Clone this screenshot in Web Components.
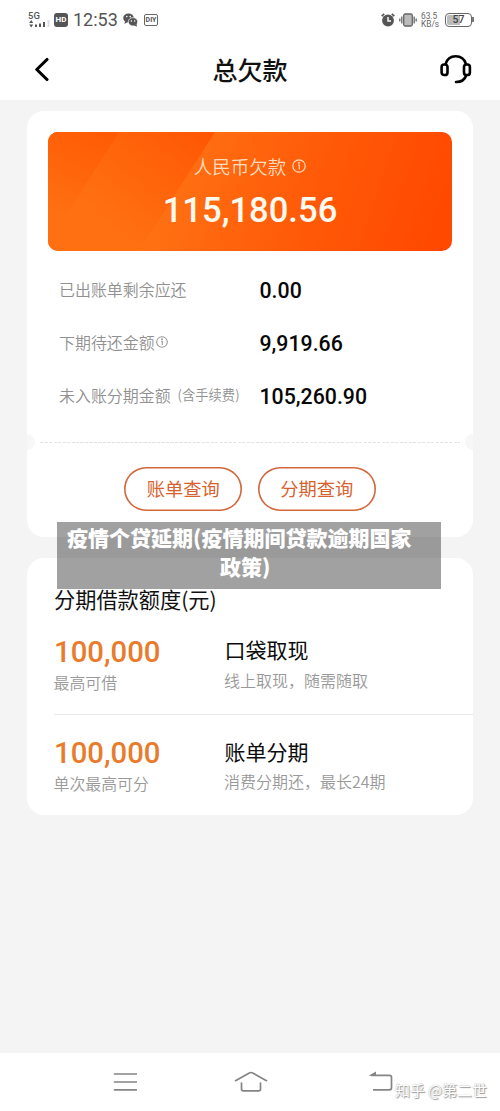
<!DOCTYPE html>
<html lang="zh-CN">
<head>
<meta charset="utf-8">
<title>总欠款</title>
<style>
html,body{margin:0;padding:0}
body{width:500px;height:1111px;overflow:hidden;background:#f4f4f4;font-family:"Noto Sans CJK SC",sans-serif}
</style>
</head>
<body>
<debt-app></debt-app>
<script>
const define = (name, html) => {
  const t = document.createElement('template');
  t.innerHTML = html;
  customElements.define(name, class extends HTMLElement {
    constructor() {
      super();
      this.attachShadow({mode: 'open'}).appendChild(t.content.cloneNode(true));
    }
  });
};

define('info-icon', `<style>:host{display:inline-block;width:14px;height:14px}svg{display:block;width:100%;height:100%}</style>
<svg viewBox="0 0 14 14" fill="none" stroke="currentColor" stroke-width="1.200"><circle cx="7" cy="7" r="6.200"/><path d="M6 6H7.300V10.500"/><circle cx="7" cy="3.700" r=".4" fill="currentColor"/></svg>`);

define('status-bar', `<style>
:host{display:flex;height:39px;align-items:center;padding:0 28px 0 28px;box-sizing:border-box;color:#555;font-family:Roboto,sans-serif}
svg{display:block;flex:none}
.net{width:23px;height:17px;display:flex;flex-direction:column}
.net span{font:500 9.500px/9px Roboto,sans-serif}
.time{font:400 18px/20px Roboto,sans-serif;width:45px;margin-left:5px;white-space:nowrap}
.hd{background:#555;color:#fff;border-radius:3px;width:14px;height:14px;font:700 8px/14px Roboto,sans-serif;text-align:center;margin-left:3px}
.diy{box-sizing:border-box;width:14px;height:12px;border:1px solid #666;border-radius:2px;font:700 7px/10px Roboto,sans-serif;display:flex;justify-content:center;margin-left:6px}
.grow{flex:1}
.speed{font:400 8.300px/8px Roboto,sans-serif;width:19px;margin-left:4px;white-space:nowrap;color:#666}
.bat{box-sizing:border-box;width:27px;height:14px;border:1.4px solid #666;border-radius:4px;margin-left:5px;background:linear-gradient(90deg,#bbb 57%,#fff 57%);background-clip:content-box;padding:1px;font:500 10.5px/10px Roboto,sans-serif;text-align:center;color:#444}
.cap{width:1.5px;height:5px;background:#777;margin-right:-1.5px}
</style>
<div class="net"><span>5G</span><svg width="23" height="8" fill="#555"><path d="M3.200 0 5.200 2.900H1.200ZM3.200 7.500 5.200 4.600H1.200Z"/><path d="M7 4.500h2V7H7zM11 3.500h2V7h-2zM15 2h2v5h-2z"/><path d="M19.500 0h2v7h-2z" fill="#ddd"/></svg></div>
<div class="hd">HD</div>
<div class="time">12:53</div>
<svg style="margin-left:5px" width="15" height="14" viewBox="0 0 15 14"><ellipse cx="5.500" cy="5" rx="5.300" ry="4.600" fill="#555"/><path fill="#555" d="M2 8 1.500 10.900 4.500 9Z"/><ellipse cx="10" cy="8.800" rx="4.700" ry="4.200" fill="#555" stroke="#fff" stroke-width=".7"/><path fill="#555" d="m11 12.300 2.900 1.400-.3-2.700Z"/><g fill="#fff"><circle cx="3.800" cy="3.600" r=".8"/><circle cx="7.200" cy="3.600" r=".8"/><circle cx="8.400" cy="7.900" r=".75"/><circle cx="11.700" cy="7.900" r=".75"/></g></svg>
<div class="diy">DIY</div>
<div class="grow"></div>
<svg width="14" height="14" viewBox="0 0 14 14"><circle cx="7" cy="7.500" r="5.900" fill="#555"/><path d="M.7 3.200 3.200.8M13.300 3.200 10.800.8" stroke="#555" stroke-width="1.700"/><path d="M7 4v4h3" fill="none" stroke="#fff" stroke-width="1.400"/></svg>
<svg style="margin-left:4px" width="18" height="14" viewBox="0 0 18 14" fill="none" stroke="#666" stroke-width="1.300"><rect x="4.700" y="1" width="8.600" height="12" rx="1.500" fill="#bbb"/><path d="M2.800 3.500v7M.8 5.500v3M15.200 3.500v7M17.200 5.500v3"/></svg>
<div class="speed">63.5<br>KB/s</div>
<div class="bat">57</div><div class="cap"></div>`);

define('title-bar', `<style>
:host{display:grid;grid-template-columns:1fr auto 1fr;align-items:center;height:61px;padding:0 28px 0 28px;box-sizing:border-box}
h1{margin:-2px 0 0;font-size:25px;line-height:36px;font-weight:500;color:#111}
svg{display:block}.l{margin:-2px 0 0 6px}.r{justify-self:end;margin-top:-1px}
</style>
<svg class="l" width="16" height="24" viewBox="0 0 16 24" fill="none" stroke="#000" stroke-width="3.100" stroke-linecap="round" stroke-linejoin="round"><path d="M13 2.500 2.800 12.500 13 22.500"/></svg>
<h1><slot></slot></h1>
<svg class="r" width="32" height="30" viewBox="0 0 32 30" fill="none" stroke="#000" stroke-width="2.600" stroke-linecap="round"><rect x="1.600" y="10.500" width="5.900" height="10.500" rx="2.600"/><rect x="24" y="10.500" width="5.900" height="10.500" rx="2.600"/><path d="M5.600 10C7 5 11 2.300 15.800 2.300S24.400 5 26 10M26.200 21.500C24.800 25.700 21 28 16 28"/></svg>`);

define('debt-hero', `<style>
:host{display:grid;height:118.500px;border-radius:10px;overflow:hidden;color:#fff}
:host>*{grid-area:1/1}
svg{display:block;width:100%;height:100%}
.c{display:flex;flex-direction:column;align-items:center;padding-top:21px;z-index:1}
.l{display:flex;align-items:center;gap:6px;font-size:18.500px;line-height:26px;font-weight:350;color:#ffdcc0}
.n{font:500 34.600px/40px Roboto,sans-serif;margin-top:11px;color:#fffaf0}
</style>
<svg viewBox="0 0 404 118.500" preserveAspectRatio="none"><defs>
<linearGradient id="a" gradientUnits="userSpaceOnUse" x1="120" y1="20" x2="390" y2="110"><stop offset="0" stop-color="#ff7214"/><stop offset=".5" stop-color="#ff5b08"/><stop offset="1" stop-color="#ff4800"/></linearGradient>
<linearGradient id="b" gradientUnits="userSpaceOnUse" x1="160" y1="0" x2="70" y2="100"><stop offset="0" stop-color="#ff5604"/><stop offset=".5" stop-color="#ff640b"/><stop offset="1" stop-color="#ff7012"/></linearGradient>
<linearGradient id="d" gradientUnits="userSpaceOnUse" x1="60" y1="0" x2="15" y2="85"><stop offset="0" stop-color="#ff5a05"/><stop offset="1" stop-color="#ff7012"/></linearGradient></defs>
<path fill="url(#a)" d="M0 0h404v119H0z"/><path fill="url(#b)" d="M0 0H167L91 119H0Z"/><path fill="url(#d)" d="M0 0H71L0 112Z"/></svg>
<div class="c"><div class="l"><slot></slot><info-icon></info-icon></div><div class="n"><slot name="amount"></slot></div></div>`);

define('bill-row', `<style>
:host{display:grid;grid-template-columns:200px 1fr;align-items:center;height:53px;color:#909090;font-size:15.950px;font-weight:350}
.l{display:flex;align-items:center;line-height:24px;white-space:nowrap;margin:-1px 0 0 -.5px}
.v{font:500 21.300px/26px Roboto,sans-serif;color:#080808;padding-top:3px}
::slotted(small){font-size:13.300px;margin-left:7px}
::slotted(info-icon){width:12px;height:12px;margin-left:1.500px}
</style><div class="l"><slot></slot></div><div class="v"><slot name="value"></slot></div>`);

define('ticket-divider', `<style>
:host{display:flex;align-items:center;justify-content:space-between;height:16px;overflow:hidden}
i{width:16px;height:16px;border-radius:8px;background:#f7f7f7;flex:none}
i:first-of-type{margin-left:-8px}i:last-of-type{margin-right:-8px}
span{flex:1;height:1px;margin:0 5px;background:repeating-linear-gradient(90deg,#e2e2e2 0 3px,transparent 3px 4.500px)}
</style><i></i><span></span><i></i>`);

define('pill-button', `<style>
:host{display:block;box-sizing:border-box;width:118px;height:43.500px;box-shadow:inset 0 0 0 1.600px #d3673c;border-radius:22px;color:#d8622f;text-align:center;font-size:18.300px;line-height:42px}
</style><slot></slot>`);

define('quota-row', `<style>
:host{display:grid;grid-template-columns:170.500px 1fr;height:100.500px;box-sizing:border-box}
.n{font:500 29.300px/32px Roboto,sans-serif;color:#e97b2c;padding-top:22px}
.s{font-size:15.900px;line-height:22px;color:#999;font-weight:350;margin-top:4px;margin-left:-.5px;white-space:nowrap}
.t{font-size:21px;line-height:30px;color:#0c0c0c;padding-top:20.500px}
.r .s{margin-top:4.500px;font-size:16px}
</style><div><div class="n"><slot name="n"></slot></div><div class="s"><slot name="cap"></slot></div></div>
<div class="r"><div class="t"><slot name="t"></slot></div><div class="s"><slot name="d"></slot></div></div>`);

define('caption-overlay', `<style>
:host{display:block;position:absolute;left:57px;top:522px;width:384px;height:67px;box-sizing:border-box;background:rgba(0,0,0,.37);color:#fff;font-size:21px;font-weight:900;line-height:28.500px;padding-top:1px;white-space:nowrap}
div{padding-left:10px}div+div{padding-left:163px}
</style><div><slot></slot></div><div><slot name="second"></slot></div>`);

define('nav-bar', `<style>
:host{display:block;position:relative;height:58px;background:#fff}
.i{display:flex;padding:17px 0 0 113px}
svg{display:block}
.h{margin-left:96.500px}.k{margin-left:100.500px}
.w{position:absolute;left:395px;top:26px;font-size:14.900px;line-height:22px;color:#fff;white-space:nowrap;text-shadow:1px 1px 1px #999,0 0 1px #999}
</style><div class="i">
<svg width="24" height="24" fill="none" stroke="#858585" stroke-width="1.700" stroke-linecap="round"><path d="M1.500 4h22M1.500 12h22M1.500 19.800h22"/></svg>
<svg class="h" width="34" height="24" viewBox="0 0 34 24" fill="none" stroke="#858585" stroke-width="1.700" stroke-linecap="round"><path d="M1.500 10.700 15.300 3Q17 2 18.700 3L32.500 10.700M7.500 13v6q0 1.800 1.800 1.800h15.400q1.800 0 1.800-1.800v-6"/></svg>
<svg class="k" width="25" height="24" viewBox="0 0 25 24" fill="none" stroke="#858585" stroke-width="1.700"><path d="M3 5.400h18.500q2 0 2 2v10.400q0 2-2 2H5"/><path d="M.5 5.700 8 1.500V5.700Z" fill="#858585" stroke="none"/></svg>
</div><div class="w"><slot></slot></div>`);

define('debt-app', `<style>
:host{display:flex;flex-direction:column;width:500px;height:1111px;position:relative}
header{background:#fff;height:100px}
main{flex:1;padding:10.500px 27px 0}
section{background:#fff;border-radius:17px;box-sizing:border-box}
.bill{height:426.500px;padding-top:21.500px}
.bill debt-hero{margin:0 21px}
.rows{padding:12.500px 0 0 32.500px}
ticket-divider{margin-top:12px}
.b{display:flex;justify-content:center;gap:15.500px;padding:17px 0 0}
.quota{height:257px;margin-top:21px;padding:25.500px 0 0 27px;overflow:hidden}
h2{font-size:21.200px;font-weight:400;line-height:30px;margin:0;color:#111;position:relative;z-index:2}
quota-row+quota-row{border-top:1px solid #e8e8e8}
</style>
<header><status-bar></status-bar><title-bar>总欠款</title-bar></header>
<main>
<section class="bill">
<debt-hero>人民币欠款<span slot="amount">115,180.56</span></debt-hero>
<div class="rows">
<bill-row>已出账单剩余应还<span slot="value">0.00</span></bill-row>
<bill-row>下期待还金额<info-icon></info-icon><span slot="value">9,919.66</span></bill-row>
<bill-row>未入账分期金额<small>(含手续费)</small><span slot="value">105,260.90</span></bill-row>
</div>
<ticket-divider></ticket-divider>
<div class="b"><pill-button>账单查询</pill-button><pill-button>分期查询</pill-button></div>
</section>
<section class="quota">
<h2>分期借款额度(元)</h2>
<quota-row><span slot="n">100,000</span><span slot="cap">最高可借</span><span slot="t">口袋取现</span><span slot="d">线上取现，随需随取</span></quota-row>
<quota-row><span slot="n">100,000</span><span slot="cap">单次最高可分</span><span slot="t">账单分期</span><span slot="d">消费分期还，最长24期</span></quota-row>
</section>
</main>
<nav-bar>知乎 @第二世</nav-bar>
<caption-overlay>疫情个贷延期(疫情期间贷款逾期国家<span slot="second">政策)</span></caption-overlay>`);
</script>
</body>
</html>
